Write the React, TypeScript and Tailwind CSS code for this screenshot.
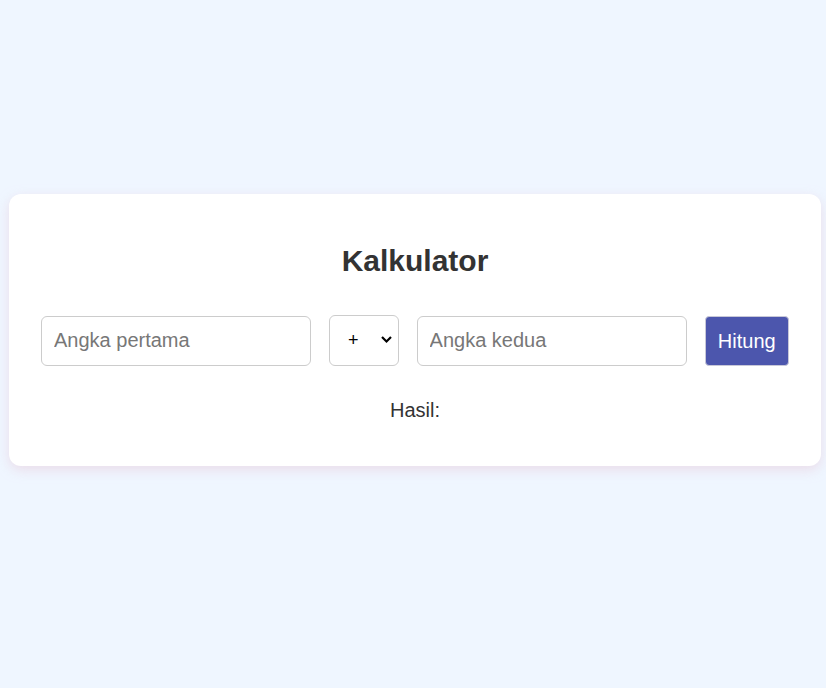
import { useState } from "react";

export default function App() {
  const [a, setA] = useState("");
  const [b, setB] = useState("");
  const [op, setOp] = useState("+");
  const [hasil, setHasil] = useState("");

  const hitung = () => {
    const x = parseFloat(a);
    const y = parseFloat(b);
    if (isNaN(x) || isNaN(y)) return setHasil("");
    let r = 0;
    if (op === "+") r = x + y;
    else if (op === "-") r = x - y;
    else if (op === "*") r = x * y;
    else r = x / y;
    setHasil(String(r));
  };

  return (
    <div className="min-h-screen bg-[#eff6ff] pt-[194px] font-['Liberation_Sans',Arial,sans-serif] text-[#333]">
      {/* Card */}
      <div className="ml-[9px] w-[812px] rounded-xl bg-white px-8 pt-[50px] pb-[44px] shadow-[0_4px_12px_rgba(232,205,220,0.6)]">
        <h2 className="text-center text-[30px] font-bold leading-[34px]">Kalkulator</h2>

        <div className="mt-[37px] flex items-center gap-[18px]">
          <input
            type="number"
            value={a}
            onChange={(e) => setA(e.target.value)}
            placeholder="Angka pertama"
            className="h-[50px] w-[270px] rounded-md border border-[#ccc] px-3 text-[20px] placeholder:text-[#777] focus:outline-none"
          />
          <div className="relative h-[51px] w-[70px]">
            <select
              value={op}
              onChange={(e) => setOp(e.target.value)}
              className="h-full w-full appearance-none rounded-md border border-[#ccc] bg-white pl-[18px] text-[18px] text-black focus:outline-none"
            >
              <option value="+">+</option>
              <option value="-">-</option>
              <option value="*">×</option>
              <option value="/">÷</option>
            </select>
            {/* chevron */}
            <svg
              className="pointer-events-none absolute right-[6px] top-[20px]"
              width="13"
              height="9"
              viewBox="0 0 13 9"
              fill="none"
            >
              <path d="M2 2l4.5 4.5L11 2" stroke="#000" strokeWidth="2.2" />
            </svg>
          </div>
          <input
            type="number"
            value={b}
            onChange={(e) => setB(e.target.value)}
            placeholder="Angka kedua"
            className="h-[50px] w-[270px] rounded-md border border-[#ccc] px-3 text-[20px] placeholder:text-[#777] focus:outline-none"
          />
          <button
            onClick={hitung}
            className="h-[50px] w-[85px] rounded border border-[#c8c8d8] bg-[#4c56ad] text-[20px] text-white"
          >
            Hitung
          </button>
        </div>

        <p className="mt-[33px] text-center text-[20px] leading-[23px]">Hasil: {hasil}</p>
      </div>
    </div>
  );
}
